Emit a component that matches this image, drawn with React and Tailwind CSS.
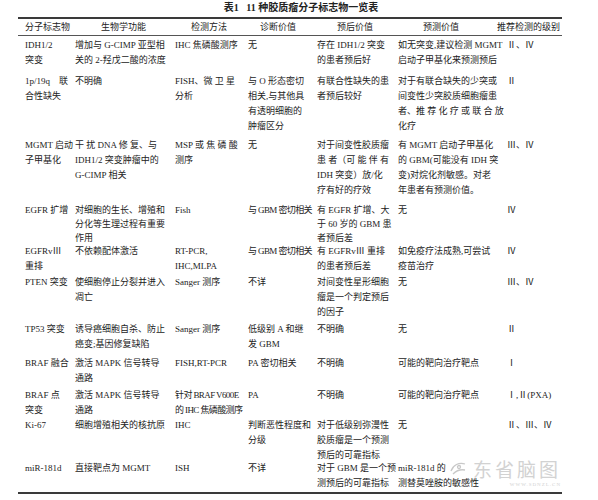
const rows = [
  {
    h: "h-[36px]",
    c: [
      ["IDH1/2", "突变"],
      ["增加与 G-CIMP 亚型相", "关的 2-羟戊二酸的浓度"],
      ["IHC 焦磷酸测序"],
      ["无"],
      ["存在 IDH1/2 突变", "的患者预后好"],
      ["如无突变,建议检测 MGMT", "启动子甲基化来预测预后"],
      ["Ⅱ、Ⅳ"],
    ],
  },
  {
    h: "h-[64px]",
    c: [
      ["1p/19q　联", "合性缺失"],
      ["不明确"],
      ["FISH、微 卫 星", "分析"],
      ["与 O 形态密切", "相关,与其他具", "有透明细胞的", "肿瘤区分"],
      ["有联合性缺失的患", "者预后较好"],
      ["对于有联合缺失的少突或", "间变性少突胶质细胞瘤患", "者、推 荐 化 疗 或 联 合 放", "化疗"],
      ["Ⅱ"],
    ],
  },
  {
    h: "h-[65px]",
    c: [
      ["MGMT 启动", "子甲基化"],
      ["干 扰 DNA 修 复、与", "IDH1/2 突变肿瘤中的", "G-CIMP 相关"],
      ["MSP 或 焦 磷 酸", "测序"],
      ["无"],
      ["对于间变性胶质瘤", "患 者（可 能 伴 有", "IDH 突变）放/化", "疗有好的疗效"],
      ["有 MGMT 启动子甲基化", "的 GBM(可能没有 IDH 突", "变)对烷化剂敏感。对老", "年患者有预测价值。"],
      ["Ⅲ、Ⅳ"],
    ],
  },
  {
    h: "h-[41px]",
    tight: true,
    c: [
      ["EGFR 扩增"],
      ["对细胞的生长、增殖和", "分化等生理过程有重要", "作用"],
      ["Fish"],
      ["与 GBM 密切相关"],
      ["有 EGFR 扩增、大", "于 60 岁的 GBM 患", "者预后差"],
      ["无"],
      ["Ⅳ"],
    ],
  },
  {
    h: "h-[31px]",
    c: [
      ["EGFRvⅢ", "重排"],
      ["不依赖配体激活"],
      ["RT-PCR,", "IHC,MLPA"],
      ["与 GBM 密切相关"],
      ["有 EGFRvⅢ 重排", "的患者预后差"],
      ["如免疫疗法成熟,可尝试", "疫苗治疗"],
      ["Ⅳ"],
    ],
  },
  {
    h: "h-[47px]",
    c: [
      ["PTEN 突变"],
      ["使细胞停止分裂并进入", "凋亡"],
      ["Sanger 测序"],
      ["不详"],
      ["对间变性星形细胞", "瘤是一个判定预后", "的因子"],
      ["无"],
      ["Ⅲ、Ⅳ"],
    ],
  },
  {
    h: "h-[34px]",
    c: [
      ["TP53 突变"],
      ["诱导癌细胞自杀、防止", "癌变;基因修复缺陷"],
      ["Sanger 测序"],
      ["低级别 A 和继", "发 GBM"],
      ["不明确"],
      ["无"],
      ["Ⅱ"],
    ],
  },
  {
    h: "h-[32px]",
    c: [
      ["BRAF 融合"],
      ["激活 MAPK 信号转导", "通路"],
      ["FISH,RT-PCR"],
      ["PA 密切相关"],
      ["不明确"],
      ["可能的靶向治疗靶点"],
      ["Ⅰ"],
    ],
  },
  {
    h: "h-[30px]",
    c: [
      ["BRAF 点", "突变"],
      ["激活 MAPK 信号转导", "通路"],
      ["针对 BRAF V600E", "的 IHC 焦磷酸测序"],
      ["PA"],
      ["不明确"],
      ["可能的靶向治疗靶点"],
      ["Ⅰ,Ⅱ(PXA)"],
    ],
  },
  {
    h: "h-[43px]",
    c: [
      ["Ki-67"],
      ["细胞增殖相关的核抗原"],
      ["IHC"],
      ["判断恶性程度和", "分级"],
      ["对于低级别弥漫性", "胶质瘤是一个预测", "预后的可靠指标"],
      ["无"],
      ["Ⅱ、Ⅲ、Ⅳ"],
    ],
  },
  {
    h: "h-[33px]",
    c: [
      ["miR-181d"],
      ["直接靶点为 MGMT"],
      ["ISH"],
      ["不详"],
      ["对于 GBM 是一个预", "测预后的可靠指标"],
      ["miR-181d 的", "测替莫唑胺的敏感性"],
      [""],
    ],
  },
];

const narrow = ["与 GBM 密切相关", "针对 BRAF V600E", "的 IHC 焦磷酸测序"];

const heads = ["分子标志物", "生物学功能", "检测方法", "诊断价值", "预后价值", "预测价值", "推荐检测的级别"];
const headAlign = ["", "pl-[26px]", "pl-[16px]", "pl-[12px]", "pl-[20px]", "pl-[25px]", "-ml-[8px]"];
const cols = "grid grid-cols-[50px_100px_73px_69px_81px_107px_1fr]";

export default function App() {
  return (
    <div
      className="relative w-[598px] h-[500px] bg-white text-[#222] text-[9px] overflow-hidden"
      style={{ fontFamily: '"Liberation Serif", "Noto Sans CJK SC", serif' }}
    >
      <div className="h-[17px] leading-[16px] text-center font-bold text-[10px] pl-[4px]">
        表1&nbsp;&nbsp;&nbsp;11 种胶质瘤分子标志物一览表
      </div>
      <div className="ml-[18px] w-[544px]">
        <div className="h-[2px] bg-[#3a3a3a]" />
        <div className={`${cols} pl-[7px] h-[17px] leading-[17px] border-b border-[#555]`}>
          {heads.map((t, i) => (
            <div key={i} className={`whitespace-nowrap ${headAlign[i]}`}>{t}</div>
          ))}
        </div>
        {rows.map((r, i) => (
          <div key={i} className={`${cols} pl-[7px] pt-[2px] ${r.h} ${r.tight ? "leading-[14px]" : "leading-[15px]"}`}>
            {r.c.map((lines, j) => (
              <div key={j} className={`whitespace-nowrap ${j === 6 ? "pl-[2px]" : ""}`}>
                {lines.map((l, k) => (
                  <div key={k} className={narrow.includes(l) ? "tracking-[-0.6px]" : ""}>{l}</div>
                ))}
              </div>
            ))}
          </div>
        ))}
        <div className="h-[2px] bg-[#3a3a3a]" />
      </div>
      <div className="absolute left-[448px] top-[459px] flex items-start gap-[3px] text-[#d2d2d2] pointer-events-none">
        <svg width="22" height="18" viewBox="0 0 22 18" fill="none" stroke="#c8c8c8" strokeWidth="1.3">
          <path d="M3 12c2-6 8-9 14-7" />
          <path d="M5 15c3-3 7-5 12-4" />
          <circle cx="11" cy="8" r="1.5" />
        </svg>
        <div className="flex flex-col items-end leading-none">
          <div className="text-[19px] tracking-[3px]" style={{ fontFamily: '"Noto Sans CJK SC", sans-serif' }}>东省脑图</div>
          <div className="text-[5px] mt-[4px] tracking-[1px]">WWW.SDNZL.CN</div>
        </div>
      </div>
    </div>
  );
}
